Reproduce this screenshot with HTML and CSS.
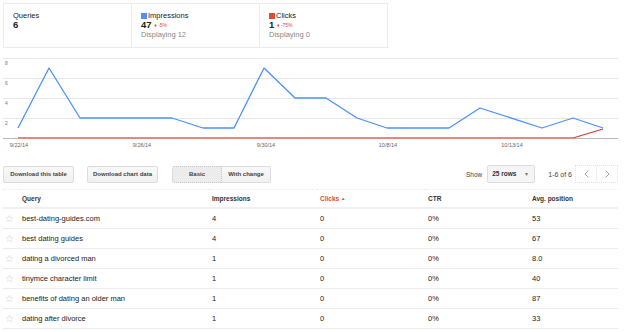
FILE: index.html
```html
<!DOCTYPE html>
<html>
    <head>
        <title>Search Queries</title>
        <link rel="stylesheet" href="styles.css">
    </head>
    <body>
        <div class="page">
            <div class="summary">
                <div class="stat">
                    <div class="stat-label">Queries</div>
                    <div class="stat-value">6</div>
                </div>
                <div class="stat">
                    <div class="stat-label"><span class="swatch blue"></span>Impressions</div>
                    <div class="stat-value">47 <span class="change">&#9830; -5%</span></div>
                    <div class="stat-note">Displaying 12</div>
                </div>
                <div class="stat">
                    <div class="stat-label"><span class="swatch red"></span>Clicks</div>
                    <div class="stat-value">1 <span class="change">&#9830; -75%</span></div>
                    <div class="stat-note">Displaying 0</div>
                </div>
            </div>

            <svg class="chart" width="630" height="104" viewBox="0 50 630 104">
                <!-- grid -->
                <g stroke="#e6e6e6" stroke-width="1">
                    <line x1="3" y1="58.5" x2="618" y2="58.5"/>
                    <line x1="3" y1="78.5" x2="618" y2="78.5"/>
                    <line x1="3" y1="98.5" x2="618" y2="98.5"/>
                    <line x1="3" y1="118.5" x2="618" y2="118.5"/>
                </g>
                <line x1="3" y1="138.5" x2="618" y2="138.5" stroke="#bbb" stroke-width="1"/>
                <g class="axis" fill="#777" font-size="5">
                    <text x="5" y="65">8</text>
                    <text x="5" y="85">6</text>
                    <text x="5" y="105">4</text>
                    <text x="5" y="125">2</text>
                </g>
                <polyline fill="none" stroke="#e8887d" stroke-width="2"
                    points="18,138 573,138"/>
                <polyline fill="none" stroke="#d0402f" stroke-width="1.3"
                    points="573,138 603,129"/>
                <polyline fill="none" stroke="#4d90fe" stroke-width="1.3" stroke-linejoin="round"
                    points="18,128 49,68 80,118 111,118 141,118 172,118 203,128 234,128 264,68 295,98 326,98 357,118 387,128 418,128 449,128 480,108 542,128 573,118 603,128"/>
                <g class="axis" fill="#666" font-size="5.5" text-anchor="middle">
                    <text x="19" y="147">9/22/14</text>
                    <text x="142" y="147">9/26/14</text>
                    <text x="266" y="147">9/30/14</text>
                    <text x="388" y="147">10/8/14</text>
                    <text x="512" y="147">10/13/14</text>
                </g>
            </svg>

            <div class="toolbar">
                <div class="toolbar-left">
                    <button class="btn btn-wide">Download this table</button>
                    <button class="btn btn-wide">Download chart data</button>
                    <div class="toggle">
                        <button class="btn toggle-on">Basic</button>
                        <button class="btn">With change</button>
                    </div>
                </div>
                <div class="toolbar-right">
                    <span class="show-label">Show</span>
                    <div class="rows-select">25 rows <span class="caret">&#9662;</span></div>
                    <span class="range">1-6 of 6</span>
                    <div class="pager">
                        <span class="pager-btn"><svg width="5" height="8" viewBox="0 0 5 8"><polyline points="4.5,0.5 1,4 4.5,7.5" fill="none" stroke="#999" stroke-width="0.9"/></svg></span>
                        <span class="pager-btn"><svg width="5" height="8" viewBox="0 0 5 8"><polyline points="0.5,0.5 4,4 0.5,7.5" fill="none" stroke="#999" stroke-width="0.9"/></svg></span>
                    </div>
                </div>
            </div>

            <table class="queries">
                <colgroup>
                    <col class="col-star">
                    <col class="col-query">
                    <col class="col-num">
                    <col class="col-num">
                    <col class="col-ctr">
                    <col class="col-pos">
                </colgroup>
                <thead>
                    <tr>
                        <th></th>
                        <th>Query</th>
                        <th>Impressions</th>
                        <th class="sorted">Clicks <span class="sort-arrow">&#9650;</span></th>
                        <th>CTR</th>
                        <th>Avg. position</th>
                    </tr>
                </thead>
                <tbody>
                    <tr><td class="star">&#9734;</td><td>best-dating-guides.com</td><td>4</td><td>0</td><td>0%</td><td>53</td></tr>
                    <tr><td class="star">&#9734;</td><td>best dating guides</td><td>4</td><td>0</td><td>0%</td><td>67</td></tr>
                    <tr><td class="star">&#9734;</td><td>dating a divorced man</td><td>1</td><td>0</td><td>0%</td><td>8.0</td></tr>
                    <tr><td class="star">&#9734;</td><td>tinymce character limit</td><td>1</td><td>0</td><td>0%</td><td>40</td></tr>
                    <tr><td class="star">&#9734;</td><td>benefits of dating an older man</td><td>1</td><td>0</td><td>0%</td><td>87</td></tr>
                    <tr><td class="star">&#9734;</td><td>dating after divorce</td><td>1</td><td>0</td><td>0%</td><td>33</td></tr>
                </tbody>
            </table>
        </div>
    </body>
</html>
```

FILE: styles.css
```css
body {
    margin: 0;
    background: #fff;
    font-family: "Liberation Sans", Arial, sans-serif;
    color: #222;
}

.page {
    width: 615px;
    margin-left: 3px;
    padding-top: 3px;
}

/* summary boxes */
.summary {
    display: flex;
    width: 385px;
    border: 1px solid #ebebeb;
    border-right: none;
    height: 43px;
}

.stat {
    width: 118px;
    padding: 7px 0 0 9px;
    border-right: 1px solid #ebebeb;
}

.stat-label {
    font-size: 7.5px;
    line-height: 9px;
    color: #222;
}

.swatch {
    display: inline-block;
    width: 6px;
    height: 6px;
    margin-right: 1px;
    vertical-align: -0.5px;
}

.swatch.blue {
    background: #4d90fe;
}

.swatch.red {
    background: #dd4b39;
}

.stat-value {
    font-size: 9.5px;
    font-weight: bold;
    line-height: 10px;
}

.change {
    font-size: 5px;
    font-weight: normal;
    color: #dd4b39;
    vertical-align: 1px;
}

.stat-note {
    font-size: 7.5px;
    line-height: 10px;
    color: #888;
}

/* chart */
.chart {
    display: block;
    margin-top: 2px;
    margin-left: -3px;
    font-family: "Liberation Sans", Arial, sans-serif;
}

/* toolbar */
.toolbar {
    display: flex;
    justify-content: space-between;
    align-items: center;
    margin-top: 11px;
    height: 18px;
}

.toolbar-left {
    display: flex;
    align-items: center;
}

.btn {
    height: 17px;
    padding: 0;
    margin: 0;
    border: 1px solid #dcdcdc;
    border-radius: 2px;
    background: linear-gradient(#f8f8f8, #f1f1f1);
    color: #444;
    font-family: "Liberation Sans", Arial, sans-serif;
    font-size: 6px;
    font-weight: bold;
    white-space: nowrap;
    cursor: pointer;
}

.btn-wide {
    width: 71px;
    margin-right: 13px;
}

.btn-wide + .btn-wide {
    margin-right: 14px;
}

.toggle {
    display: flex;
}

.toggle .btn:first-child {
    width: 50px;
    border-radius: 2px 0 0 2px;
}

.toggle .btn + .btn {
    width: 49px;
    border-left: none;
    border-radius: 0 2px 2px 0;
}

.toggle-on {
    background: #ececec;
    border: 1px dotted #c8c8c8;
}

.toolbar-right {
    display: flex;
    align-items: center;
}

.show-label {
    font-size: 6.5px;
    color: #444;
    margin-right: 5px;
}

.rows-select {
    width: 38px;
    height: 16px;
    line-height: 16px;
    padding: 0 4px;
    border: 1px solid #dcdcdc;
    border-radius: 2px;
    background: #f5f5f5;
    font-size: 6.5px;
    font-weight: bold;
    color: #333;
    position: relative;
}

.caret {
    position: absolute;
    right: 6px;
    top: 0;
    font-size: 6px;
    font-weight: normal;
    color: #777;
}

.range {
    font-size: 7px;
    color: #444;
    margin: 0 3px 0 13px;
}

.pager {
    display: flex;
    border: 1px dotted #e2e2e2;
    height: 16px;
}

.pager-btn {
    width: 20px;
    display: flex;
    align-items: center;
    justify-content: center;
}

.pager-btn + .pager-btn {
    border-left: 1px solid #eee;
}

/* table */
.queries {
    margin-top: 6px;
    width: 615px;
    border-collapse: collapse;
    table-layout: fixed;
    font-size: 7.5px;
    color: #222;
}

.col-star { width: 16px; }
.col-query { width: 190px; }
.col-num { width: 108px; }
.col-ctr { width: 104px; }
.col-pos { width: 89px; }

.queries th {
    text-align: left;
    font-size: 6.5px;
    font-weight: bold;
    color: #333;
    height: 17px;
    padding: 0 0 0 3px;
    border-top: 1px dotted #ececec;
    border-bottom: 2px solid #f0f0f0;
}

.queries th.sorted {
    color: #dd4b39;
}

.sort-arrow {
    font-size: 4.5px;
    vertical-align: 1px;
}

.queries td {
    height: 19px;
    padding: 0 0 0 3px;
    border-bottom: 1px solid #ececec;
    white-space: nowrap;
}

.queries td.star {
    padding: 0 0 0 2px;
    font-size: 10px;
    color: #c8c8c8;
}
```
